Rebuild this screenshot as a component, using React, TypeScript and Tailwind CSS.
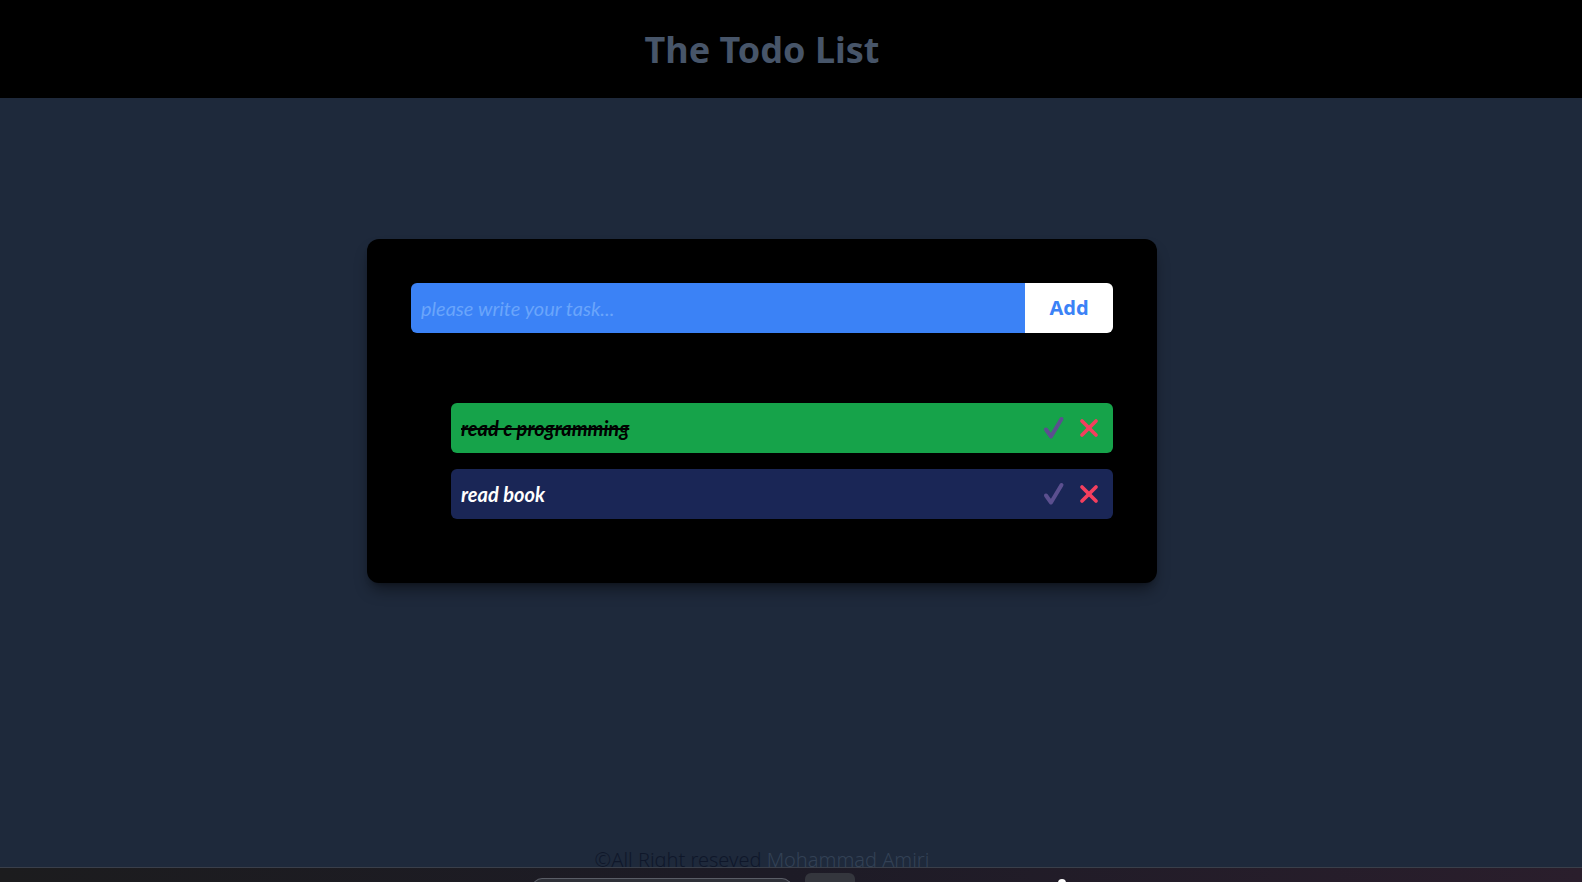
import React, { useState } from 'react';
import { X } from 'lucide-react';

type Todo = { id: number; text: string; done: boolean };

const CheckMark: React.FC = () => (
  <svg width="22" height="24" viewBox="0 0 22 24" fill="none">
    <path d="M3 13.5 8 20.5 18.5 3" stroke="#5b4f8f" strokeWidth="4" strokeLinecap="round" strokeLinejoin="round" />
  </svg>
);

export default function App() {
  const [todos, setTodos] = useState<Todo[]>([
    { id: 1, text: 'read c programming', done: true },
    { id: 2, text: 'read book', done: false },
  ]);
  const [task, setTask] = useState('');

  const addTodo = () => {
    if (!task.trim()) return;
    setTodos([...todos, { id: Date.now(), text: task, done: false }]);
    setTask('');
  };

  return (
    <div className="flex h-[882px] flex-col overflow-hidden bg-[#1e293b] font-['Noto_Sans',sans-serif]">
      {/* Header */}
      <header className="flex h-[98px] shrink-0 items-center bg-black pr-[58px]">
        <h1 className="w-full pt-[2px] text-center text-[36px] font-bold text-[#475569]">The Todo List</h1>
      </header>

      {/* Main */}
      <main className="flex flex-1 justify-center pr-[58px] pt-[141px]">
        <div className="h-[344px] w-[790px] rounded-xl bg-black p-11 shadow-lg shadow-black/40">
          <div className="flex h-[50px] overflow-hidden rounded-md">
            <input
              value={task}
              onChange={(e) => setTask(e.target.value)}
              placeholder="please write your task..."
              className="flex-1 bg-[#3b82f6] px-[10px] font-['Lato',sans-serif] text-xl italic text-white outline-none placeholder:text-[#6aa5fb]"
            />
            <button
              onClick={addTodo}
              className="w-[88px] bg-white text-xl font-bold text-[#3b82f6]"
            >
              Add
            </button>
          </div>

          <ul className="mt-[70px] flex flex-col gap-4 pl-10">
            {todos.map((todo) => (
              <li
                key={todo.id}
                className={
                  todo.done
                    ? 'flex h-[50px] items-center justify-between rounded-md bg-[#16a34a] pl-[10px] pr-[10px]'
                    : 'flex h-[50px] items-center justify-between rounded-md bg-[#1a2656] pl-[10px] pr-[10px]'
                }
              >
                <span
                  className={
                    todo.done
                      ? "font-['Lato',sans-serif] text-xl font-bold italic text-black line-through"
                      : "font-['Lato',sans-serif] text-xl font-bold italic text-white"
                  }
                >
                  {todo.text}
                </span>
                <div className="flex items-center gap-[10px]">
                  <button
                    onClick={() =>
                      setTodos(todos.map((t) => (t.id === todo.id ? { ...t, done: !t.done } : t)))
                    }
                  >
                    <CheckMark />
                  </button>
                  <button onClick={() => setTodos(todos.filter((t) => t.id !== todo.id))}>
                    <X className="h-[28px] w-[28px] text-[#f43f5e]" strokeWidth={3.2} />
                  </button>
                </div>
              </li>
            ))}
          </ul>
        </div>
      </main>

      {/* Footer */}
      <footer className="-mb-[5px] pr-[58px] text-center text-xl font-light leading-6 text-[#0f172a]">
        ©All Right reseved <span className="text-[#334155]">Mohammad Amiri</span>
      </footer>

      {/* Taskbar strip */}
      <div className="relative z-10 h-[15px] shrink-0 border-t border-[#3a3f4a] bg-gradient-to-r from-[#1c1c1e] via-[#1d1b26] to-[#2a1e2c]">
        <div className="absolute left-[532px] top-[10px] h-[10px] w-[260px] rounded-t-xl border border-[#5a5d66] bg-[#2e3038]" />
        <div className="absolute left-[805px] top-[5px] h-[12px] w-[50px] rounded-t-md bg-[#34363d]" />
        <div className="absolute left-[1058px] top-[11px] h-[8px] w-[8px] rounded-full bg-white" />
      </div>
    </div>
  );
}
